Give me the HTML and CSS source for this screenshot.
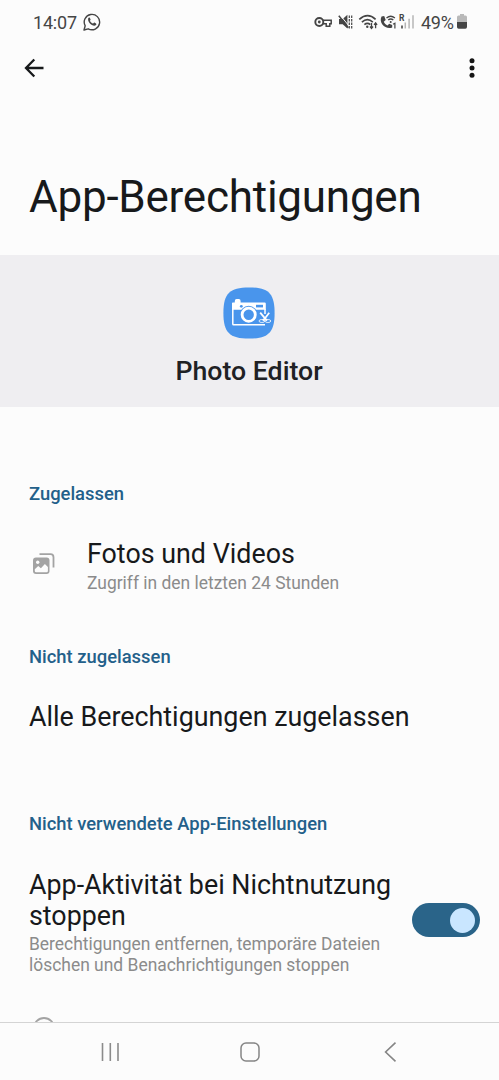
FILE: index.html
```html
<!DOCTYPE html>
<html lang="de">
<head>
<meta charset="utf-8">
<title>App-Berechtigungen</title>
<link rel="stylesheet" href="styles.css">
</head>
<body>
<div class="screen">
  <header class="status">
    <span class="time">14:07</span>
    <svg class="whatsapp" width="18" height="18" viewBox="0 0 18 18"><path d="M1 17l1.200-4.200A7.700 7.700 0 1 1 5.200 15.800Z" fill="none" stroke="#454545" stroke-width="1.400" stroke-linejoin="round"/><path d="M5.300 5c.5-.7 1.300-.7 1.600-.1l.7 1.500c.1.400-.5 1-.7 1.300.7 1.400 1.800 2.300 3.200 2.900.4-.3.900-1.100 1.300-1l1.600.8c.6.400.3 1.400-.3 1.900-2.600 1.900-8.900-3.100-7.400-7.300Z" fill="#454545"/></svg>
    <svg class="indicators" width="104" height="24" viewBox="312 10 104 24">
      <g fill="none" stroke="#454545">
        <circle cx="319.300" cy="22" r="4" stroke-width="1.900"/>
        <path d="M323 20.200h8.200v3.600h-1.400v2.500h-3.600v-2.500H323" stroke-width="1.500"/>
      </g>
      <circle cx="319.300" cy="22" r="1.400" fill="#454545"/>
      <path d="M339 19h3.700l4.700-4.200v13.700l-4.700-4.200H339z" fill="#454545"/>
      <path d="M340.200 15.200l9 11" stroke="#fcfcfc" stroke-width="1"/>
      <path d="M338.800 15.700l9.500 12" stroke="#454545" stroke-width="1.500"/>
      <path d="M349.300 15.500v13M351.700 15.500v13" stroke="#454545" stroke-width="1.200" stroke-dasharray="2.500 1"/>
      <g fill="none" stroke="#454545" stroke-width="1.700">
        <path d="M359.300 19.300q8.300-7.500 16.300 0M361.900 22.100q5.500-4.800 10.900 0M364.400 24.700q3-2.500 5.900 0"/>
        <path d="M371.500 23v5M370 26.500l1.500 1.900 1.500-1.900M375.600 28.200v-5M374.100 24.800l1.500-1.900 1.500 1.900" stroke-width="1.300"/>
      </g>
      <circle cx="367.300" cy="26.700" r="1.200" fill="#454545"/>
      <path d="M381.500 16.500l2.700-.5 1.500 4-1.900 1.700c.8 1.700 2 2.900 3.700 3.800l1.700-1.700 3 1.300v2.400c-6 2.500-14-4-10.700-11Z" fill="#454545"/>
      <path d="M386.500 18q4.200-3.500 8.400 0M388.200 20.100q2.600-2.200 5.100 0" fill="none" stroke="#454545" stroke-width="1.300"/>
      <circle cx="390.700" cy="22" r="1" fill="#454545"/>
      <path d="M393 24.300l1.900-1v5.200" fill="none" stroke="#454545" stroke-width="1.200"/>
      <text x="399" y="20.700" class="roaming">R</text>
      <path d="M402 25.500v3" stroke="#454545" stroke-width="1.600"/>
      <path d="M405.300 22.500v6M409.100 18.800v9.700M413 15.200v13.300" stroke="#b5b5b5" stroke-width="1.500"/>
    </svg>
    <span class="percent">49%</span>
    <svg class="battery" width="10" height="16" viewBox="0 0 10 16"><path d="M3 0h4v1.500h1.500Q10 1.500 10 3v5H0V3Q0 1.500 1.500 1.500H3z" fill="#b9b9b9"/><path d="M0 8h10v5q0 1.700-1.700 1.700H1.700Q0 14.700 0 13z" fill="#454545"/></svg>
  </header>
  <nav class="appbar">
    <svg width="20" height="20" viewBox="0 0 20 20"><path d="M10.300 1.500L2 10l8.300 8.500M2 10h17.500" fill="none" stroke="#17191b" stroke-width="2.300"/></svg>
    <svg width="6" height="20" viewBox="0 0 6 20"><g fill="#151515"><circle cx="3" cy="2.700" r="2.500"/><circle cx="3" cy="10" r="2.500"/><circle cx="3" cy="17.300" r="2.500"/></g></svg>
  </nav>
  <main>
    <h1>App-Berechtigungen</h1>
    <section class="app">
      <svg width="52" height="52" viewBox="0 0 52 52">
        <path d="M26 .4C45.500.4 51.600 6.500 51.600 26S45.500 51.600 26 51.600.4 45.500.4 26 6.500.4 26 .4Z" fill="#4995ec"/>
        <path d="M9 16.200q0-.8.800-.8h2v-1.300q0-2 1.800-2h2.200q1.800 0 1.800 2v1.300h24q1.200 0 1.200 1.200v6.200H9z" fill="#fff"/>
        <path d="M9.800 22v15q0 .8.800.8h31.400M42 22v5" fill="none" stroke="#fff" stroke-width="1.500"/>
        <circle cx="18.300" cy="19.300" r="1.400" fill="#4995ec"/><rect x="33" y="17.800" width="7" height="2.600" fill="#4995ec"/>
        <circle cx="25.700" cy="27.700" r="8.900" fill="#4995ec"/><circle cx="25.700" cy="27.700" r="6.600" fill="none" stroke="#fff" stroke-width="2.800"/>
        <path d="M37.200 25.700l5 6 2 1.800M46.200 25.700l-4.500 6-2 1.800" fill="none" stroke="#fff" stroke-width="1.800"/>
        <g fill="none" stroke="#fff" stroke-width=".8"><ellipse cx="38.900" cy="34" rx="2.900" ry="1.500"/><ellipse cx="44.900" cy="34" rx="2.900" ry="1.500"/></g>
      </svg>
      <h2>Photo Editor</h2>
    </section>
    <h3 class="allowed">Zugelassen</h3>
    <div class="permission">
      <svg width="22" height="22" viewBox="0 0 22 22"><path d="M6.500 1.200h11q3 0 3 3V14.500" fill="none" stroke="#a3a3a3" stroke-width="1.800"/><rect y="4.500" width="16.500" height="16.500" rx="3" fill="#a3a3a3"/><circle cx="4.700" cy="9.200" r="1.700" fill="#fcfcfc"/><path d="M1.800 16.300l3.400-3.300 2.700 2.200 4-4.200 3 3v3.900q0 1.400-1.400 1.400H3.200q-1.400 0-1.400-1.400z" fill="#fcfcfc"/></svg>
      <div><div class="item">Fotos und Videos</div><div class="detail access">Zugriff in den letzten 24 Stunden</div></div>
    </div>
    <h3 class="denied">Nicht zugelassen</h3>
    <div class="item all">Alle Berechtigungen zugelassen</div>
    <h3 class="unused">Nicht verwendete App-Einstellungen</h3>
    <div class="setting">
      <div><div class="item">App-Aktivität bei Nichtnutzung<br>stoppen</div><div class="detail remove">Berechtigungen entfernen, temporäre Dateien<br>löschen und Benachrichtigungen stoppen</div></div>
      <div class="toggle"><span class="knob"></span></div>
    </div>
    <svg class="info" width="22" height="22" viewBox="0 0 22 22"><circle cx="11" cy="11" r="10" fill="none" stroke="#a3a3a3" stroke-width="1.800"/></svg>
  </main>
  <footer>
    <svg width="20" height="20" viewBox="0 0 20 20"><path d="M2.500 1v18M10.300 1v18M18 1v18" stroke="#8b8b8b" stroke-width="1.600"/></svg>
    <svg width="20" height="20" viewBox="0 0 20 20"><rect x="1" y="1" width="18" height="18" rx="5" fill="none" stroke="#858585" stroke-width="1.500"/></svg>
    <svg width="20" height="20" viewBox="0 0 20 20"><path d="M15.500.7L5.600 10l9.900 9.300" fill="none" stroke="#858585" stroke-width="1.600"/></svg>
  </footer>
</div>
</body>
</html>
```

FILE: styles.css
```css
* { box-sizing: border-box; }
body { margin: 0; background: #fcfcfc; color: #17191b; font-family: Roboto, sans-serif; }
svg { display: block; flex-shrink: 0; }
h1, h2, h3 { margin: 0; white-space: nowrap; }
.screen { width: 499px; height: 1080px; display: flex; flex-direction: column; overflow: hidden; }
.status { height: 44px; display: flex; align-items: center; padding: 0 32px 0 33px; color: #454545; font-size: 18px; }
.time { width: 50px; letter-spacing: -.2px; }
.indicators { margin-left: auto; margin-right: 5px; }
.roaming { font: bold 8.5px Roboto, sans-serif; fill: #454545; }
.percent { width: 35px; letter-spacing: -.3px; }
.battery { margin-left: 1px; }
.appbar { height: 48px; display: flex; justify-content: space-between; align-items: center; padding: 0 24px; }
main { flex: 1; min-height: 0; overflow: hidden; }
h1 { margin: 79px 0 0 29px; font-size: 44px; line-height: 52px; font-weight: 400; letter-spacing: -.24px; }
.app { margin-top: 32px; height: 152px; padding: 32px 1px 0 0; background: #efeef1; display: flex; flex-direction: column; align-items: center; }
h2 { margin-top: 16px; font-size: 26.7px; line-height: 32px; font-weight: 500; color: #202124; }
h3 { margin-left: 29px; color: #23608a; font-size: 18.4px; line-height: 24px; font-weight: 500; }
.allowed { margin-top: 75px; }
.permission { margin: 33px 0 0 33px; display: flex; align-items: flex-start; gap: 32px; }
.permission svg { margin-top: 14px; }
.item { font-size: 26.85px; line-height: 31px; white-space: nowrap; }
.detail { color: #8b8b8b; font-size: 17.45px; line-height: 21px; white-space: nowrap; }
.access { margin-top: 3px; }
.denied { margin-top: 51px; }
.all { margin: 33px 0 0 29px; }
.unused { margin-top: 79px; }
.setting { margin: 34px 19.5px 0 29px; display: flex; justify-content: space-between; align-items: flex-start; }
.remove { margin-top: 2px; line-height: 20.5px; }
.toggle { width: 67.5px; height: 34px; margin-top: 33.4px; padding-right: 4.5px; border-radius: 17px; background: #2a6489; display: flex; align-items: center; justify-content: flex-end; }
.knob { width: 25px; height: 25px; border-radius: 50%; background: #c9e6ff; }
.info { margin: 42px 0 0 33px; }
footer { height: 58px; flex-shrink: 0; border-top: 1px solid #d4d4d4; display: flex; justify-content: space-between; align-items: center; padding: 1px 99px 0 100px; }
```
